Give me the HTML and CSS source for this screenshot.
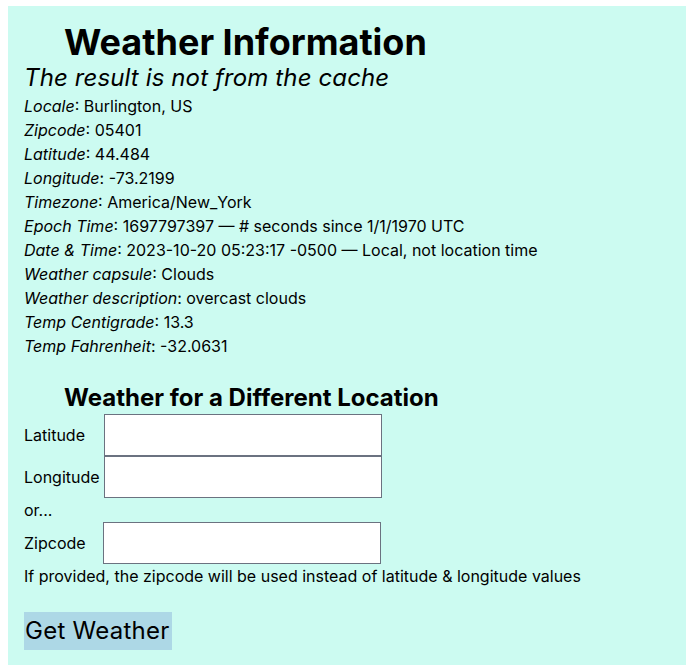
FILE: index.html
```html
<!DOCTYPE html>
<html lang="en">
<head>
<meta charset="utf-8">
<title>Weather Information</title>
<link rel="stylesheet" href="styles.css">
</head>
<body>
<div class="panel">
  <h1 class="title">Weather Information</h1>
  <h2 class="cache">The result is not from the cache</h2>
  <div class="details">
    <div><em>Locale</em>: Burlington, US</div>
    <div><em>Zipcode</em>: 05401</div>
    <div><em>Latitude</em>: 44.484</div>
    <div><em>Longitude</em>: -73.2199</div>
    <div><em>Timezone</em>: America/New_York</div>
    <div><em>Epoch Time</em>: 1697797397 — # seconds since 1/1/1970 UTC</div>
    <div><em>Date &amp; Time</em>: 2023-10-20 05:23:17 -0500 — Local, not location time</div>
    <div><em>Weather capsule</em>: Clouds</div>
    <div><em>Weather description</em>: overcast clouds</div>
    <div><em>Temp Centigrade</em>: 13.3</div>
    <div><em>Temp Fahrenheit</em>: -32.0631</div>
  </div>
  <form class="form" onsubmit="return false">
    <h2 class="subtitle">Weather for a Different Location</h2>
    <div class="row"><label class="label" for="lat">Latitude</label><input class="field" id="lat" type="text"></div>
    <div class="row"><label class="label" for="lon">Longitude</label><input class="field" id="lon" type="text"></div>
    <div class="line">or...</div>
    <div class="row"><label class="label label-zip" for="zip">Zipcode</label><input class="field" id="zip" type="text"></div>
    <div class="line">If provided, the zipcode will be used instead of latitude &amp; longitude values</div>
    <button class="submit" type="submit">Get Weather</button>
  </form>
</div>
</body>
</html>
```
FILE: styles.css
```css
html, body {
  margin: 0;
  padding: 0;
  background: #ffffff;
}
body {
  font-family: Inter, "Noto Sans", sans-serif;
  color: #000000;
  font-size: 16px;
  line-height: 24px;
  overflow: hidden;
}
.panel {
  margin: 6px 0 0 8px;
  width: 700px;
  height: 659px;
  box-sizing: border-box;
  background: #ccfbf1;
  padding: 16px 16px 15px 16px;
}
.title {
  margin: 0 0 0 40px;
  font-size: 36px;
  line-height: 40px;
  font-weight: 700;
}
.cache {
  margin: 0;
  font-size: 24px;
  line-height: 32px;
  font-weight: 400;
  font-style: italic;
  letter-spacing: 0.12px;
}
.details em {
  font-style: italic;
}
.form {
  margin-top: 24px;
}
.subtitle {
  margin: 0 0 0 40px;
  font-size: 24px;
  line-height: 32px;
  font-weight: 700;
}
.row {
  display: flex;
  align-items: baseline;
}
.label {
  width: 80px;
  flex: none;
}
.label-zip {
  width: 79px;
}
.field {
  width: 278px;
  height: 42px;
  box-sizing: border-box;
  border: 1px solid #6b7280;
  border-radius: 0;
  background: #ffffff;
  padding: 8px 12px;
  font-family: inherit;
  font-size: 16px;
  line-height: 24px;
  margin: 0;
}
.submit {
  margin-top: 24px;
  display: block;
  background: #add8e6;
  border: none;
  padding: 3px 3px 3px 1px;
  font-family: inherit;
  font-size: 24px;
  line-height: 32px;
  letter-spacing: 0.25px;
  color: #000000;
}
```
